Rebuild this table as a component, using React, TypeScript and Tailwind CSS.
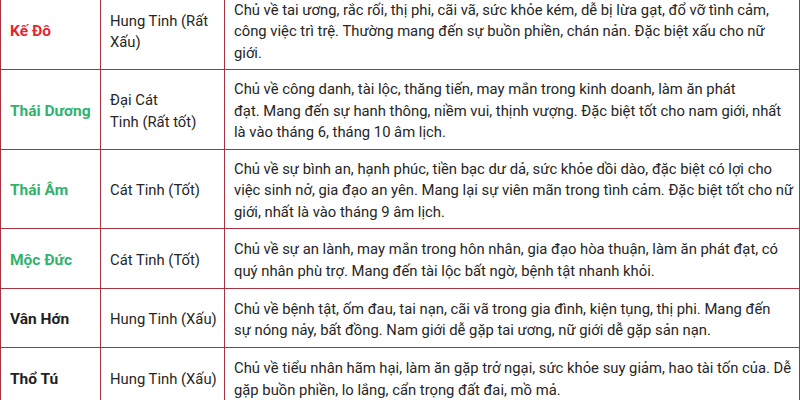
const rows = [
  {
    name: 'Kế Đô',
    color: 'text-[#e3262f]',
    type: 'Hung Tinh (Rất\nXấu)',
    desc: 'Chủ về tai ương, rắc rối, thị phi, cãi vã, sức khỏe kém, dễ bị lừa gạt, đổ vỡ tình cảm,\ncông việc trì trệ. Thường mang đến sự buồn phiền, chán nản. Đặc biệt xấu cho nữ\ngiới.',
    h: 'h-[79px]'
  },
  {
    name: 'Thái Dương',
    color: 'text-[#2fb36d]',
    type: 'Đại Cát\nTinh (Rất tốt)',
    desc: 'Chủ về công danh, tài lộc, thăng tiến, may mắn trong kinh doanh, làm ăn phát\nđạt. Mang đến sự hanh thông, niềm vui, thịnh vượng. Đặc biệt tốt cho nam giới, nhất\nlà vào tháng 6, tháng 10 âm lịch.',
    h: 'h-[80px]'
  },
  {
    name: 'Thái Âm',
    color: 'text-[#2fb36d]',
    type: 'Cát Tinh (Tốt)',
    desc: 'Chủ về sự bình an, hạnh phúc, tiền bạc dư dả, sức khỏe dồi dào, đặc biệt có lợi cho\nviệc sinh nở, gia đạo an yên. Mang lại sự viên mãn trong tình cảm. Đặc biệt tốt cho nữ\ngiới, nhất là vào tháng 9 âm lịch.',
    h: 'h-[79px]'
  },
  {
    name: 'Mộc Đức',
    color: 'text-[#2fb36d]',
    type: 'Cát Tinh (Tốt)',
    desc: 'Chủ về sự an lành, may mắn trong hôn nhân, gia đạo hòa thuận, làm ăn phát đạt, có\nquý nhân phù trợ. Mang đến tài lộc bất ngờ, bệnh tật nhanh khỏi.',
    h: 'h-[60px]'
  },
  {
    name: 'Vân Hớn',
    color: 'text-[#1f1f1f]',
    type: 'Hung Tinh (Xấu)',
    desc: 'Chủ về bệnh tật, ốm đau, tai nạn, cãi vã trong gia đình, kiện tụng, thị phi. Mang đến\nsự nóng nảy, bất đồng. Nam giới dễ gặp tai ương, nữ giới dễ gặp sản nạn.',
    h: 'h-[59px]'
  },
  {
    name: 'Thổ Tú',
    color: 'text-[#1f1f1f]',
    type: 'Hung Tinh (Xấu)',
    desc: 'Chủ về tiểu nhân hãm hại, làm ăn gặp trở ngại, sức khỏe suy giảm, hao tài tốn của. Dễ\ngặp buồn phiền, lo lắng, cẩn trọng đất đai, mồ mả.',
    h: 'h-[60px]'
  }
]

export default function App() {
  return (
    <div className="w-[800px] h-[400px] overflow-hidden bg-white font-['Roboto',sans-serif] text-[#262626]">
      <table className="-mt-[10px] w-[800px] border-collapse table-fixed text-[14.8px] leading-[21.5px]">
        <colgroup>
          <col className="w-[100px]" />
          <col className="w-[124px]" />
          <col />
        </colgroup>
        <tbody>
          {rows.map((row) => (
            <tr key={row.name} className={row.h}>
              <td className={`border border-[#a8323f] pl-[9px] pr-1 pt-[4px] align-middle text-[15.5px] font-bold ${row.color}`}>
                {row.name}
              </td>
              <td className="border border-[#a8323f] pl-[9px] pr-1 pt-[4px] align-middle whitespace-pre">
                {row.type}
              </td>
              <td className="border border-[#a8323f] pl-[9px] pr-1 pt-[4px] align-middle whitespace-pre overflow-hidden">
                {row.desc}
              </td>
            </tr>
          ))}
        </tbody>
      </table>
    </div>
  )
}
